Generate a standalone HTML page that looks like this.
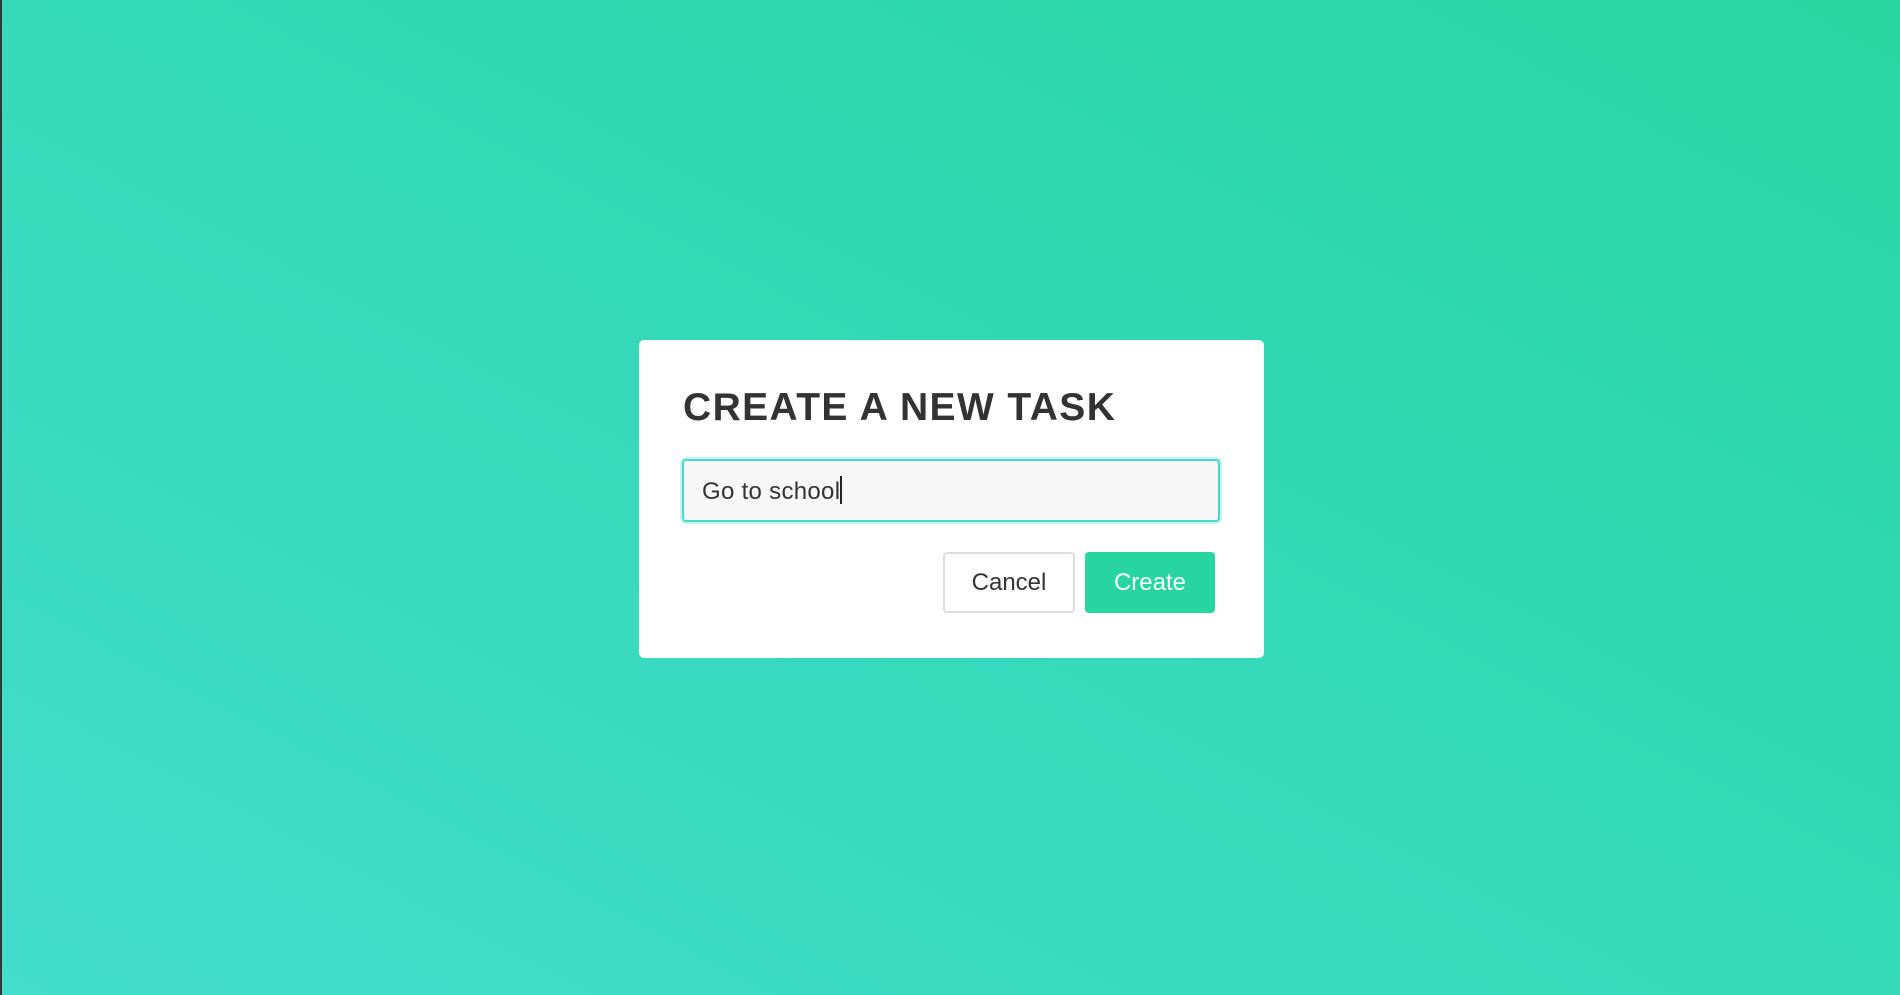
<!DOCTYPE html>
<html><head><meta charset="utf-8"><style>
html,body{margin:0;padding:0;width:1900px;height:995px;overflow:hidden;}
body{background:linear-gradient(to top right,#43ddcb 0%,#35d9b9 50%,#27d79f 100%);position:relative;font-family:"Liberation Sans",sans-serif;}
.edge{position:absolute;left:0;top:0;width:2px;height:995px;background:#2a3a36;}
.modal{position:absolute;left:639px;top:340px;width:625px;height:318px;background:#fff;border-radius:5px;}
h1{position:absolute;left:44px;top:46px;margin:0;font-size:39px;font-weight:bold;letter-spacing:1.4px;color:#333;white-space:nowrap;}
.input{position:absolute;left:43px;top:119px;width:534px;height:59px;border:2px solid #45dccb;border-radius:4px;background:#f7f7f7;box-shadow:0 0 0 2px #c9f3ee;}
.input span{position:absolute;left:18px;top:15px;font-size:24px;color:#333;letter-spacing:0.3px;}
.input span::after{content:"";display:inline-block;width:1.5px;height:28px;background:#222;vertical-align:-5px;}
.btn{position:absolute;top:212px;height:61px;box-sizing:border-box;border-radius:4px;font-size:24px;text-align:center;line-height:57px;}
.cancel{left:304px;width:132px;border:2px solid #ddd;color:#333;background:#fff;}
.create{left:446px;width:130px;background:#26d59f;color:#fff;line-height:61px;}
</style></head><body>
<div class="edge"></div>
<div class="modal">
<h1>CREATE A NEW TASK</h1>
<div class="input"><span>Go to school</span></div>
<div class="btn cancel">Cancel</div>
<div class="btn create">Create</div>
</div>
</body></html>
